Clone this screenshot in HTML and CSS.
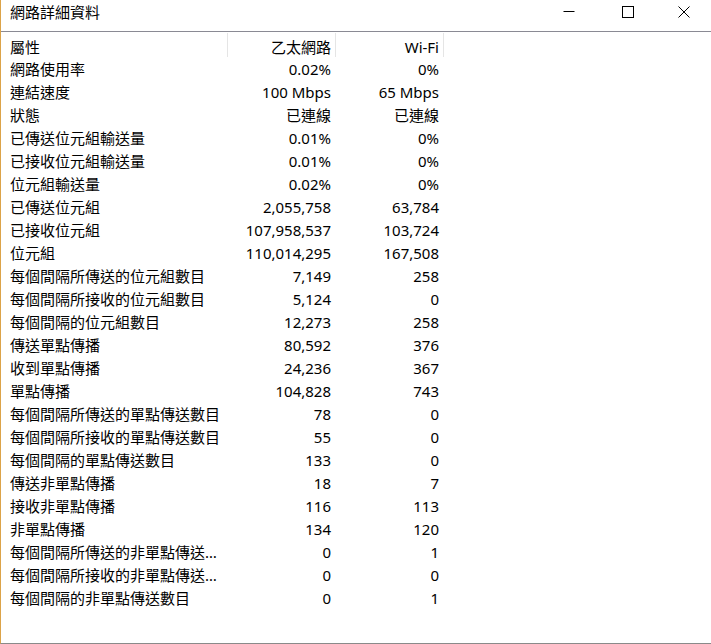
FILE: index.html
```html
<!DOCTYPE html>
<html lang="zh-Hant">
<head>
    <meta charset="UTF-8">
    <meta name="viewport" content="width=device-width, initial-scale=1.0">
    <title>網路詳細資料</title>
    <link rel="stylesheet" href="styles.css">
</head>
<body>
    <div class="window">
        <div class="titlebar">
            <span class="title">網路詳細資料</span>
            <div class="controls">
                <button class="ctl">
                    <svg width="12" height="12" viewBox="0 0 12 12"><line x1="0.5" y1="5.5" x2="11.5" y2="5.5" stroke="#000" stroke-width="1"/></svg>
                </button>
                <button class="ctl">
                    <svg width="12" height="12" viewBox="0 0 12 12"><rect x="0.5" y="0.5" width="11" height="11" fill="none" stroke="#000" stroke-width="1"/></svg>
                </button>
                <button class="ctl ctl-close">
                    <svg width="12" height="12" viewBox="0 0 12 12"><path d="M0.5 0.5 L11.5 11.5 M11.5 0.5 L0.5 11.5" stroke="#000" stroke-width="1"/></svg>
                </button>
            </div>
        </div>

        <div class="list">
            <div class="row header">
                <div class="cell name">屬性</div>
                <div class="cell num">乙太網路</div>
                <div class="cell num">Wi-Fi</div>
            </div>
            <div id="rows"></div>
        </div>
    </div>

    <script>
        const data = [
            ["網路使用率", "0.02%", "0%"],
            ["連結速度", "100 Mbps", "65 Mbps"],
            ["狀態", "已連線", "已連線"],
            ["已傳送位元組輸送量", "0.01%", "0%"],
            ["已接收位元組輸送量", "0.01%", "0%"],
            ["位元組輸送量", "0.02%", "0%"],
            ["已傳送位元組", "2,055,758", "63,784"],
            ["已接收位元組", "107,958,537", "103,724"],
            ["位元組", "110,014,295", "167,508"],
            ["每個間隔所傳送的位元組數目", "7,149", "258"],
            ["每個間隔所接收的位元組數目", "5,124", "0"],
            ["每個間隔的位元組數目", "12,273", "258"],
            ["傳送單點傳播", "80,592", "376"],
            ["收到單點傳播", "24,236", "367"],
            ["單點傳播", "104,828", "743"],
            ["每個間隔所傳送的單點傳送數目", "78", "0"],
            ["每個間隔所接收的單點傳送數目", "55", "0"],
            ["每個間隔的單點傳送數目", "133", "0"],
            ["傳送非單點傳播", "18", "7"],
            ["接收非單點傳播", "116", "113"],
            ["非單點傳播", "134", "120"],
            ["每個間隔所傳送的非單點傳送數目", "0", "1"],
            ["每個間隔所接收的非單點傳送數目", "0", "0"],
            ["每個間隔的非單點傳送數目", "0", "1"]
        ];

        const rows = document.getElementById("rows");
        data.forEach(item => {
            const row = document.createElement("div");
            row.classList.add("row");
            item.forEach((text, idx) => {
                const cell = document.createElement("div");
                cell.classList.add("cell", idx === 0 ? "name" : "num");
                cell.textContent = text;
                row.appendChild(cell);
            });
            rows.appendChild(row);
        });
    </script>
</body>
</html>
```

FILE: styles.css
```css
html, body {
    margin: 0;
    padding: 0;
    background: #fff;
}

body {
    font-family: "Noto Sans", "Noto Sans CJK TC", sans-serif;
    font-size: 15px;
    color: #000;
}

.window {
    width: 710px;
    height: 643px;
    border-left: 1px solid #dca349;
    border-bottom: 1px solid #8a8a8a;
    display: flex;
    flex-direction: column;
}

.titlebar {
    height: 31px;
    border-bottom: 1px solid #8a8a94;
    display: flex;
    align-items: center;
    justify-content: space-between;
    flex-shrink: 0;
}

.title {
    padding-left: 9px;
    line-height: 20px;
    margin-top: -7px;
}

.controls {
    display: flex;
    height: 31px;
}

.ctl {
    width: 59px;
    height: 31px;
    border: none;
    background: transparent;
    padding: 0;
    display: flex;
    align-items: center;
    justify-content: center;
    padding-bottom: 7px;
}

.ctl-close {
    width: 54px;
}

.row {
    display: grid;
    grid-template-columns: 227px 108px 108px;
    height: 23px;
    line-height: 23px;
}

.row.header {
    height: 26px;
    line-height: 26px;
}

.cell {
    white-space: nowrap;
    overflow: hidden;
    text-overflow: ellipsis;
}

.name {
    padding-left: 9px;
}

.num {
    text-align: right;
    padding-right: 5px;
}

.header .cell {
    border-right: 1px solid #e5e5e5;
    margin: 1px 0 1px;
    line-height: 24px;
    padding-top: 2px;
    height: 22px;
}

.header .num {
    padding-right: 4px;
}
```
